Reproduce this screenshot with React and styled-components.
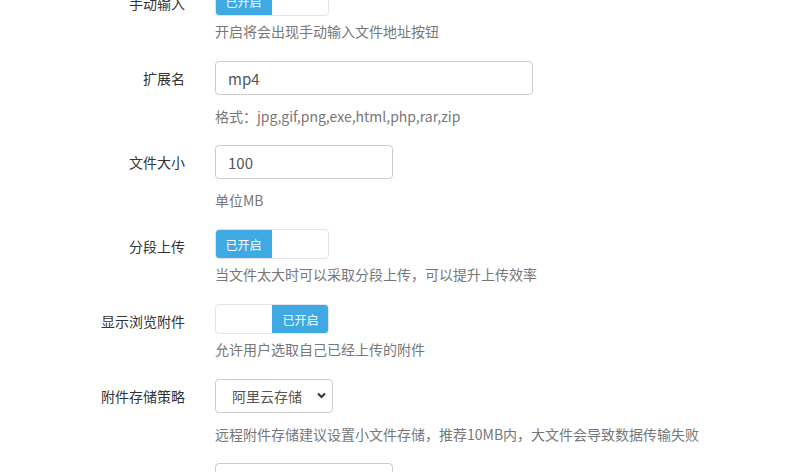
import React from 'react'
import styled, { createGlobalStyle } from 'styled-components'

const GlobalStyle = createGlobalStyle`
    html, body {
        margin: 0;
        padding: 0;
        background: #ffffff;
        overflow: hidden;
    }
    body {
        font-family: "Noto Sans CJK SC", "Noto Sans", sans-serif;
        font-size: 14px;
        color: #333333;
    }
`

const Form = styled.div`
    margin-top: -14px;
    width: 810px;
`

const Row = styled.div`
    display: grid;
    grid-template-columns: 185px 1fr;
    column-gap: 30px;
    padding-bottom: ${(props) => (props.$switch ? 20 : 19)}px;
`

const Label = styled.div`
    text-align: right;
    padding-top: 7px;
    line-height: 20px;
    font-size: 14px;
    color: #333333;
    white-space: nowrap;
`

const Field = styled.div`
    display: flex;
    flex-direction: column;
    align-items: flex-start;
`

const Help = styled.div`
    margin-top: ${(props) => (props.$switch ? 5 : 11)}px;
    line-height: 20px;
    font-size: 14px;
    color: #777777;
    white-space: nowrap;
`

const Input = styled.input`
    box-sizing: border-box;
    width: ${(props) => props.$width}px;
    height: 34px;
    padding: 0 12px;
    border: 1px solid #cccccc;
    border-radius: 4px;
    font-family: "Noto Sans CJK SC", "Noto Sans", sans-serif;
    font-size: 15px;
    color: #555555;
    background: #ffffff;
    outline: none;
`

const SwitchBox = styled.div`
    box-sizing: border-box;
    width: 114px;
    height: 30px;
    border: 1px solid #e3e4ec;
    border-radius: 4px;
    overflow: hidden;
    display: flex;
    justify-content: ${(props) => (props.$right ? 'flex-end' : 'flex-start')};
    background: #ffffff;
`

const SwitchOn = styled.div`
    width: 57px;
    height: 100%;
    margin: -1px;
    padding: 1px 0;
    background: #3ea9e2;
    color: #ffffff;
    font-size: 12px;
    display: flex;
    align-items: center;
    justify-content: center;
    letter-spacing: 0;
`

const SelectWrap = styled.div`
    position: relative;
    width: 118px;
    height: 34px;

    svg {
        position: absolute;
        right: 7px;
        top: 13px;
        pointer-events: none;
    }
`

const Select = styled.select`
    box-sizing: border-box;
    width: 100%;
    height: 100%;
    appearance: none;
    -webkit-appearance: none;
    padding: 0 0 0 16px;
    border: 1px solid #cccccc;
    border-radius: 4px;
    background: #ffffff;
    font-family: "Noto Sans CJK SC", "Noto Sans", sans-serif;
    font-size: 14px;
    color: #555555;
    outline: none;
`

const Switch = ({ right }) => (
    <SwitchBox $right={right}>
        <SwitchOn>已开启</SwitchOn>
    </SwitchBox>
)

const App = () => {
    return (
        <>
            <GlobalStyle />
            <Form>
                <Row $switch>
                    <Label>手动输入</Label>
                    <Field>
                        <Switch />
                        <Help $switch>开启将会出现手动输入文件地址按钮</Help>
                    </Field>
                </Row>
                <Row>
                    <Label>扩展名</Label>
                    <Field>
                        <Input $width={318} defaultValue='mp4' />
                        <Help>格式：jpg,gif,png,exe,html,php,rar,zip</Help>
                    </Field>
                </Row>
                <Row>
                    <Label>文件大小</Label>
                    <Field>
                        <Input $width={178} defaultValue='100' />
                        <Help>单位MB</Help>
                    </Field>
                </Row>
                <Row $switch>
                    <Label>分段上传</Label>
                    <Field>
                        <Switch />
                        <Help $switch>当文件太大时可以采取分段上传，可以提升上传效率</Help>
                    </Field>
                </Row>
                <Row $switch>
                    <Label>显示浏览附件</Label>
                    <Field>
                        <Switch right />
                        <Help $switch>允许用户选取自己已经上传的附件</Help>
                    </Field>
                </Row>
                <Row>
                    <Label>附件存储策略</Label>
                    <Field>
                        <SelectWrap>
                            <Select defaultValue='oss'>
                                <option value='local'>本地存储</option>
                                <option value='oss'>阿里云存储</option>
                            </Select>
                            <svg width='9' height='7' viewBox='0 0 9 7'>
                                <path d='M1 1.5 L4.5 5 L8 1.5' fill='none' stroke='#333' strokeWidth='2' />
                            </svg>
                        </SelectWrap>
                        <Help>远程附件存储建议设置小文件存储，推荐10MB内，大文件会导致数据传输失败</Help>
                    </Field>
                </Row>
                <Row>
                    <Label></Label>
                    <Field>
                        <Input $width={178} defaultValue='' />
                    </Field>
                </Row>
            </Form>
        </>
    )
}

export default App
